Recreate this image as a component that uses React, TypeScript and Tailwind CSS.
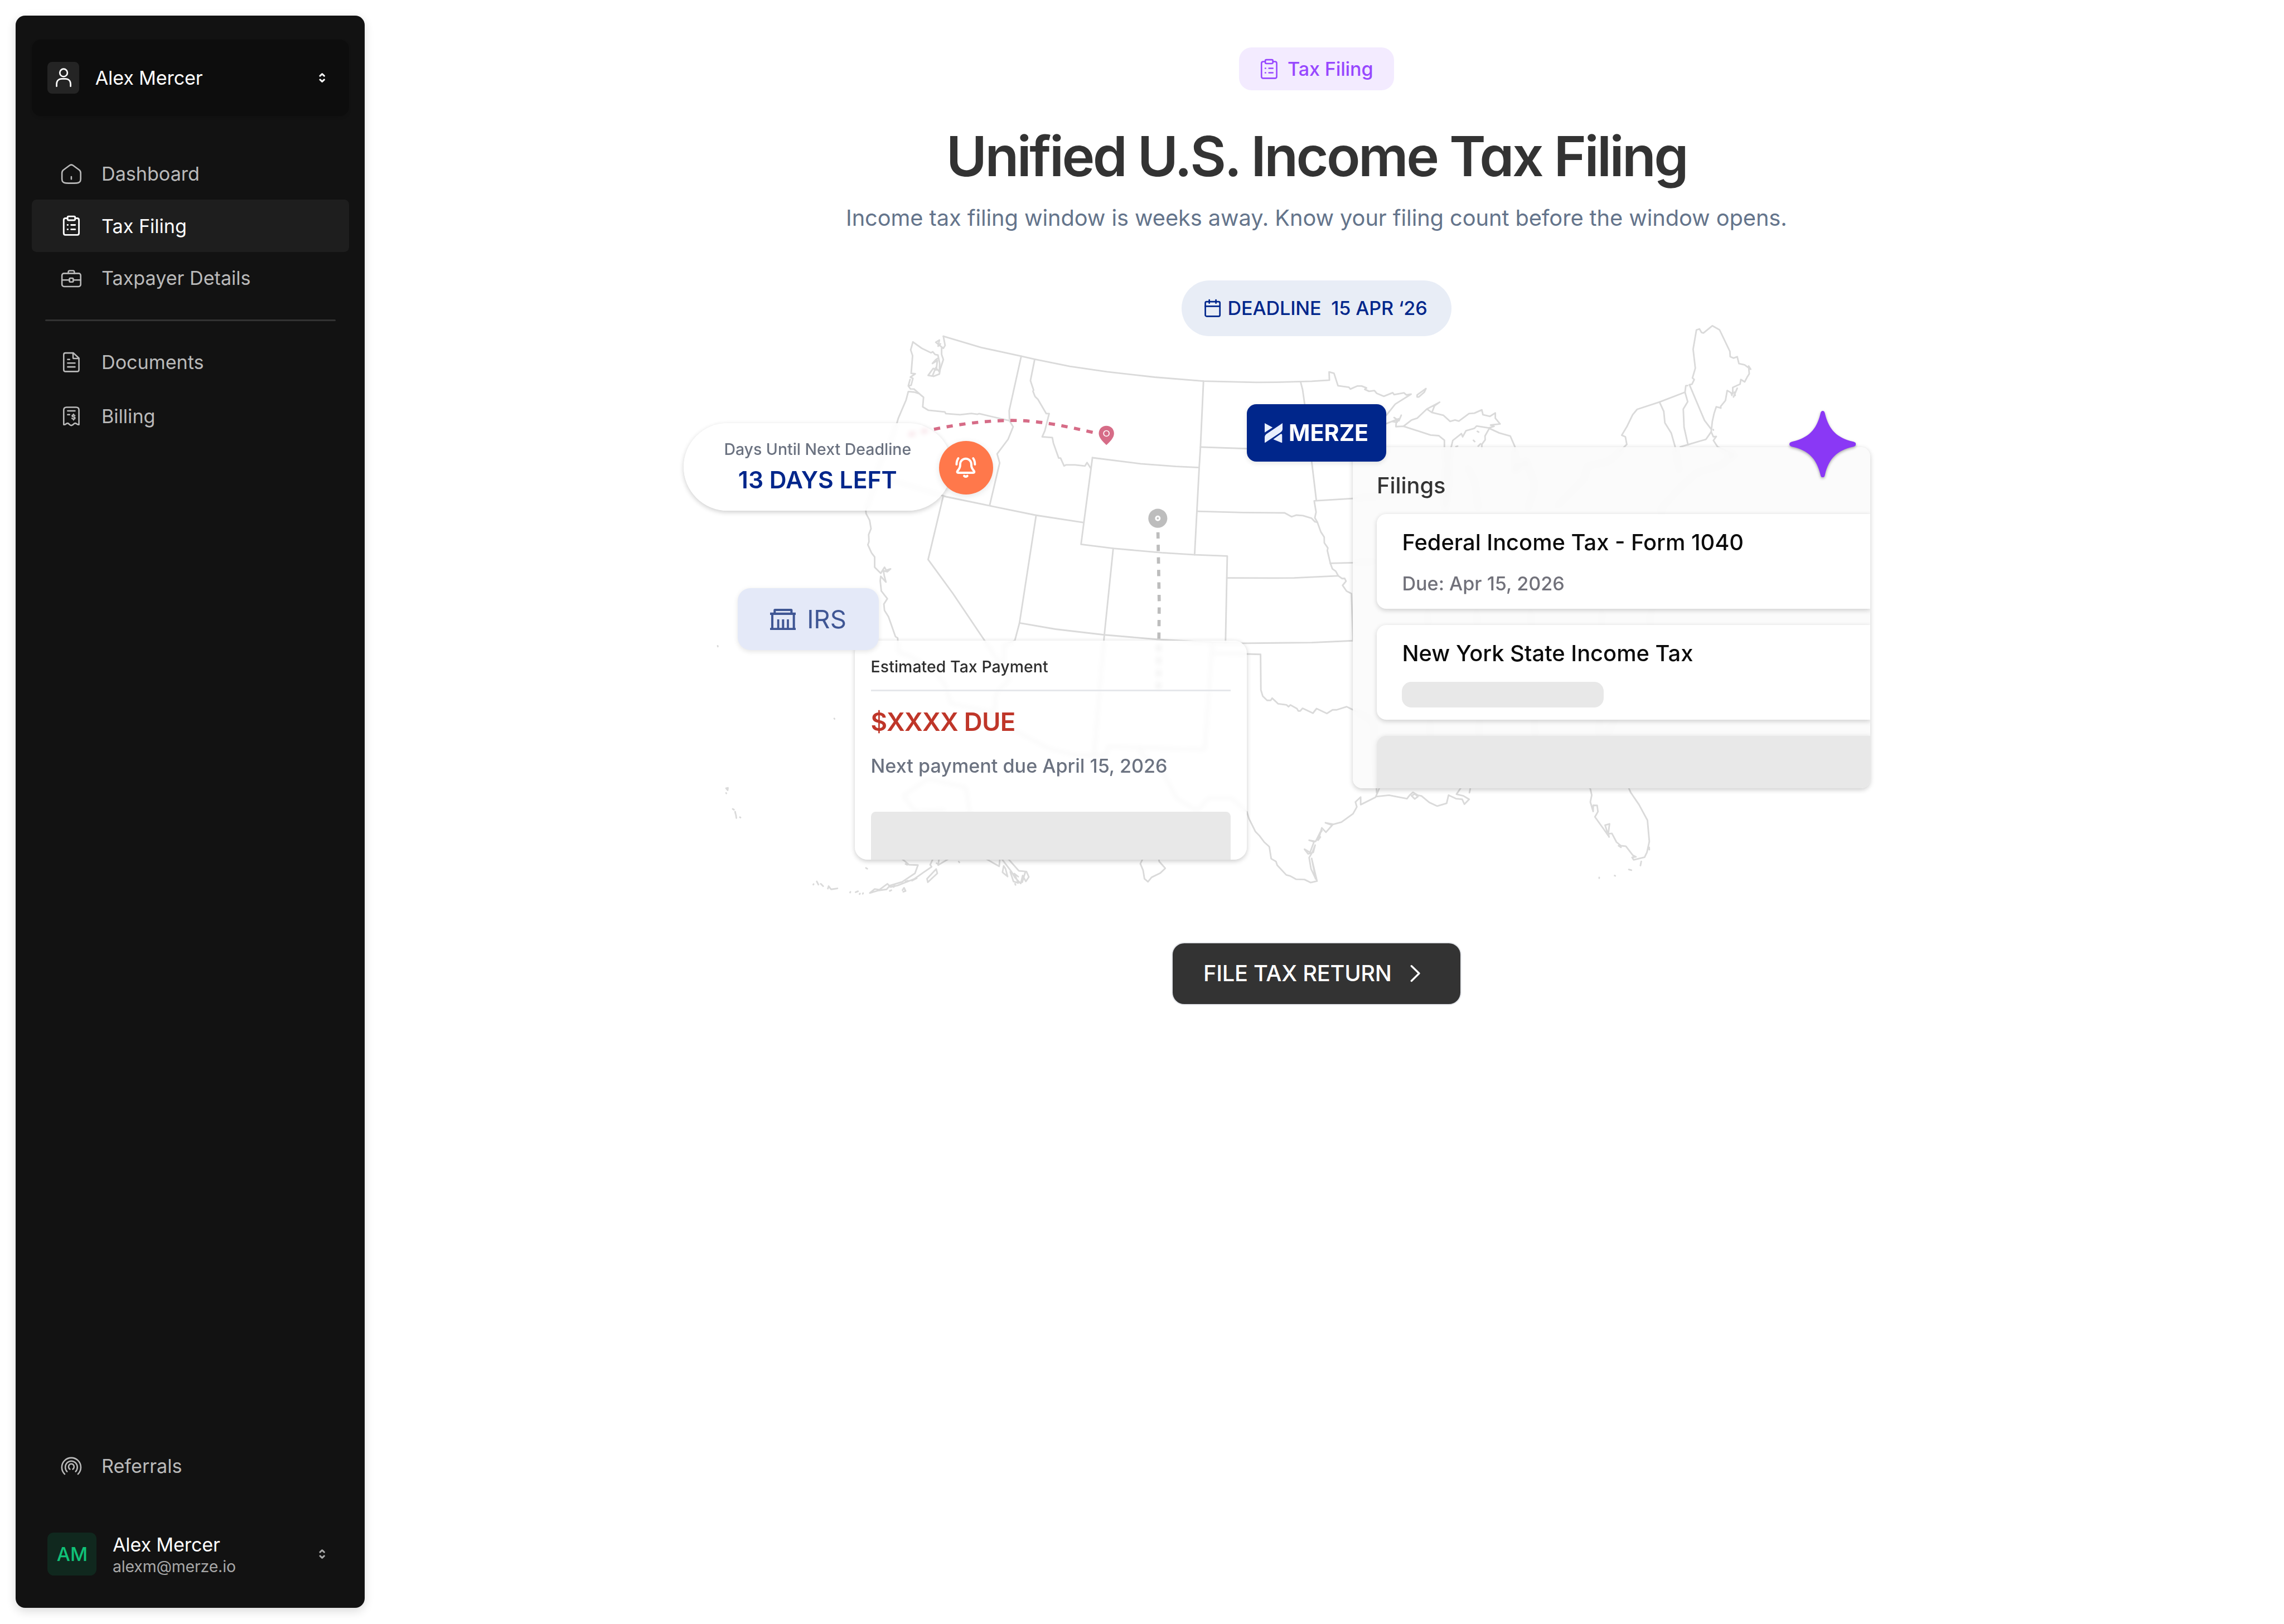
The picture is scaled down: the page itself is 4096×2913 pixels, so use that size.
import type { ReactNode } from 'react'
import { clsx } from 'clsx'

type IconProps = { className?: string }

/* ---------- icons ---------- */

function Glyph({ className, stroke = 0.9, children }: IconProps & { stroke?: number; children: ReactNode }) {
  return (
    <svg
      viewBox="0 0 14 14"
      className={clsx('shrink-0', className ?? 'size-3.5')}
      fill="none"
      stroke="currentColor"
      strokeWidth={stroke}
      strokeLinecap="round"
      strokeLinejoin="round"
    >
      {children}
    </svg>
  )
}

function HomeIcon() {
  return (
    <Glyph>
      <path d="M1.1 6.3c0-1 .4-1.5 1.2-2L6 1.6c.6-.4 1.4-.4 2 0l3.7 2.7c.8.5 1.2 1 1.2 2v3.9c0 1.7-.8 2.5-2.5 2.6-2.3.1-4.5.1-6.8 0-1.7-.1-2.5-.9-2.5-2.6z" />
      <path d="M7 8.8v1.5" />
    </Glyph>
  )
}

function ClipboardIcon({ className, stroke = 1 }: IconProps & { stroke?: number }) {
  return (
    <Glyph className={className} stroke={stroke}>
      <path d="M4.6 2.3H3.3c-.7 0-1.1.4-1.1 1.1v8.3c0 .7.4 1.1 1.1 1.1h7.4c.7 0 1.1-.4 1.1-1.1V3.4c0-.7-.4-1.1-1.1-1.1H9.4" />
      <rect x="4.6" y="1.1" width="4.8" height="2.4" rx=".7" />
      <path d="M4.6 6.5h.2M6.9 6.5h2.5M4.6 9.3h.2M6.9 9.3h2.5" />
    </Glyph>
  )
}

function BriefcaseIcon() {
  return (
    <Glyph>
      <rect x="1.1" y="4" width="11.8" height="8.3" rx="1.3" />
      <path d="M5.1 4V3.2c0-.6.3-.9.9-.9h2c.6 0 .9.3.9.9V4M1.1 8.2h4.7M8.2 8.2h4.7" />
      <rect x="5.8" y="7" width="2.4" height="2.4" rx=".5" />
    </Glyph>
  )
}

function DocumentIcon() {
  return (
    <Glyph>
      <path d="M8.3 1.1h-5c-.7 0-1.1.4-1.1 1.1v9.5c0 .7.4 1.1 1.1 1.1h7.4c.7 0 1.1-.4 1.1-1.1V4.4z" />
      <path d="M8.1 1.2v2.9c0 .3.2.5.5.5h3.1M4.7 5.2h1.2M4.7 7.5h4.6M4.7 9.9h4.6" />
    </Glyph>
  )
}

function ReceiptIcon() {
  return (
    <Glyph>
      <path d="M2.2 12.2V3c0-1.2.6-1.8 1.8-1.8h6c1.2 0 1.8.6 1.8 1.8v9.2c-1.3.2-1.5-.9-2.4-.9s-1.3 1.4-2.4 1.4-1.4-1.4-2.4-1.4-1.1 1.1-2.4.9z" />
      <path d="M4.7 3.5h4.6M4.7 5.9h1.2" />
      <path d="M9.2 6.5c-.3-.5-1.7-.5-1.7.2s1.8.5 1.8 1.3-1.5.8-1.9.2M8.4 5.6v.5M8.4 8.6v.6" strokeWidth={0.85} />
    </Glyph>
  )
}

function ReferralIcon() {
  return (
    <Glyph>
      <path d="M2.8 12A6 6 0 1 1 11.2 12" />
      <path d="M4.3 10.4a3.8 3.9 0 1 1 5.4 0" />
      <path d="M6.1 8.9a1.75 1.8 0 1 1 1.8 0" />
    </Glyph>
  )
}

function UserIcon() {
  return (
    <svg viewBox="0 0 12 12" className="size-3" fill="none" stroke="currentColor" strokeWidth=".95" strokeLinecap="round">
      <circle cx="6" cy="3" r="2.4" />
      <path d="M1.6 11.5v-1.4c0-2 1.3-3.3 3.3-3.3h2.2c2 0 3.3 1.3 3.3 3.3v1.4" />
    </svg>
  )
}

function UpDownIcon({ className }: IconProps) {
  return (
    <svg
      viewBox="0 0 4 6"
      className={clsx('h-1.5 w-1', className)}
      fill="none"
      stroke="currentColor"
      strokeWidth="1.05"
      strokeLinecap="round"
      strokeLinejoin="round"
    >
      <path d="M.7 1.8 2 .6l1.3 1.2M.7 4.2 2 5.4l1.3-1.2" />
    </svg>
  )
}

function CalendarIcon() {
  return (
    <svg
      viewBox="0 0 11 12"
      className="h-3 w-[11px]"
      fill="none"
      stroke="currentColor"
      strokeWidth=".95"
      strokeLinecap="round"
      strokeLinejoin="round"
    >
      <rect x=".9" y="1.8" width="9.2" height="9.2" rx=".8" />
      <path d="M.9 4.7h9.2M3.4.7v2M7.6.7v2" />
    </svg>
  )
}

function BellIcon() {
  return (
    <Glyph stroke={1.4}>
      <path d="M7 1.3a3.5 3.5 0 0 1 3.5 3.5c0 1.9.4 2.7 1.7 4.3.5.7.1 1.1-.5 1.1H2.3c-.6 0-1-.4-.5-1.1 1.3-1.6 1.7-2.4 1.7-4.3A3.5 3.5 0 0 1 7 1.3z" />
      <path d="M1.2 4.9C1.2 3.3 1.6 2 2.3 1.1M12.8 4.9c0-1.6-.4-2.9-1.1-3.8M6 12.2c.5.4 1.5.4 2 0" />
      <path d="M6.3 12.4c.4.4 1 .4 1.4 0" />
    </Glyph>
  )
}

function BankIcon() {
  return (
    <svg viewBox="0 0 16.4 13.4" className="h-[13.4px] w-[16.4px]" fill="currentColor">
      <path d="M2.2 2.4V.9c0-.6.3-.9.9-.9h10.2c.6 0 .9.3.9.9v1.5h2.2v1.5h-.7V12h.7v1.4H0V12h.7V3.9H0V2.4zm1.4 0h9.2v-1H3.6zM2.1 3.9V12h2.4V6.7h1.3V12h1.7V6.7h1.4V12h1.7V6.7h1.3V12h2.4V3.9z" />
    </svg>
  )
}

function MerzeMark() {
  return (
    <svg viewBox="0 0 11.3 12.5" className="h-[12.5px] w-[11.3px]" fill="#e8effd">
      <path d="M0 0v5.9l5-3.2zM0 12.5v-3C0 8 .3 7.4 1.5 6.6L11.3 0v3c0 1.6-.3 2.1-1.5 3zM5.4 10.2 9.7 7.1c.8-.5 1.3-.4 1.3.6v4.8z" />
    </svg>
  )
}

function Sparkle({ className }: IconProps) {
  return (
    <svg viewBox="0 0 42 42" className={className} fill="#8a38f5">
      <path d="M21 0c.8 0 1.3.7 1.5 2C25 12 30 17 40 19.3c1.3.3 2 .8 2 1.7s-.7 1.4-2 1.7C30 25 25 30 22.5 40c-.2 1.3-.7 2-1.5 2s-1.3-.7-1.5-2C17 30 12 25 2 22.7.7 22.4 0 21.9 0 21s.7-1.4 2-1.7C12 17 17 12 19.5 2c.2-1.3.7-2 1.5-2z" />
    </svg>
  )
}

/* ---------- map ---------- */

const COAST = [
  // washington + puget sound
  'M575.6 215.8 574.2 220.8 575.4 224.4 574.5 235.6 577.1 235.9 574 238 575.6 238.8 574.5 243.1 572.7 243.5 573.8 239.5M572.7 243.5 574 245.4 576.3 245.5 579.6 248.4 582.3 250.7 581.8 256.7 585.4 258.9 595.7 259.9 596.3 261 605.3 261.7 612.4 260.9 616.4 261.4 617.3 261 636.5 265.5',
  'M575.6 215.8 581.2 219.8 587 222.6 588.1 222 589.6 223.7 591.4 224.1 592.5 229.4 592.3 234.6 590 232 587.9 237.3 585.2 236.9 588.4 232.5 590.3 233.5 591 227.5 587.9 229.4 590.1 226.9 591.5 226',
  'M594.8 212.2 595.9 218 594.8 219.8 593.7 219 593.7 223.7 594.8 226.9 592.8 233 592.3 236 588.5 237.5M593.7 219 590 216 592.3 214.6 591.5 218.5 593 217',
  // northern border through lake superior
  'M594.8 212.2 618.7 219.3 643.9 224.8 652.4 226.7 674.5 231.2 698.1 234.6 728 238 758.8 240.5 792 241.3 804.7 241.2 827 240.6 838.2 239.9 838 234.7 841.1 235.6 843.6 243.4 850.5 244.4 851.4 245.5 855.7 243.6 858.5 243.6 861.6 244.8 860.5 245.7 863.2 246.9 866.6 246.5 868 248.2 872.5 250.1 878.1 247.8 879 249 885.2 247.9 886.7 249.2 889.7 248.7 879.7 255 874.1 262 867 269 874.1 267.3 882 264.2 880.8 266.5 878 266M883.5 262 882 265.5 879 263.5M880.5 264.5 880.1 269.2 884.9 269 902 274.5 907.1 274.9 910.7 277.8 910.7 284 914 300 911 322',
  'M884.9 269 890 265 893.5 263.9 899.6 258.1 907.7 253.8 904.5 256 902.8 260.3 899.6 258.1M902.8 260.3 910 262 914.3 265.9 917.4 265 919.8 265.7 926.2 261 929.6 260.7 934.3 258.6 935 261.7 939.4 262.7 942.8 260.6 942.8 263.9 945.8 267.5 939.8 268.2 942 269 938.7 270 931 268.8 929.6 270.3 924.3 271.8 922.2 275.6 921.4 273.6 916 277.9 915 282 911 300 911 320',
  'M893.5 249.2 899.1 245.2 898 247.5 894.5 250.5 893.5 250.5zM931.5 272.2 932.3 272.6M929 277.8 929.8 278.6M918 281.8 919 281.5M932 281.5 933.5 280',
  'M934.3 284 934.3 280.4 936.4 277.5 936.3 275.1 939 270.3 945.3 273.2 952.2 275.1 955.2 282 955 298 962 290 968 306 963 322M925 294 930 304 932 322',
  // pacific coast, then the mexican border
  'M579.6 248.4 576.3 247.4 572.7 247.1 571.3 252.4 566.4 263.9 565.5 267 561 280 554 294 552 306 545.9 322 546.1 324.1 548.3 328.2 549.2 333.5 547.7 337.3 547.9 341.7 547.2 343.7 549.5 348.8 551.5 351.4 551.5 357.9 555.3 361.7 557.7 357.9 558.8 359.8 561.5 358.9 559.5 360.7 557 360 557.5 363 558.6 367.2 555.3 363.6 555 366.5 555.7 372.9 559.5 377.7 557.3 381.1 557.7 385.1 560.2 389.1 564.6 401.6 566 402.5 566.4 411.3 575.5 414.7 587.4 422.1 595.8 431.6 599.4 443.8 625.7 449.2 625.7 453.3 661.6 472.3 678.3 476.3 697.4 476.3 698.6 470.9 719 471.6 719 475 733.3 487.2 741.7 503.4 754.8 511.6 762 503.4 776.4 503.4 786.2 512.2',
  // gulf coast
  'M786.2 512.2 787.4 516.2 791.5 524.5 794.1 527.2 797.1 531.2 800.3 534.1 801.5 541.7 804.5 543.4 805.3 545.8 811 551.9 813.3 552.5 817.1 554.6 822.5 554.8 826.3 556.7 830.4 555.8 827 541.5 829.6 554.5 826.6 548 825.4 541 827.5 537.5 829.2 533.1 828 537.7 824.8 538.6 822.5 535.7 826 537.7 828.5 531 825.4 530 829.5 530.8 832.5 524.8 831.5 529 833.4 522.2 836 525 840 520.5 835.7 519 840.7 520 845.8 518.6 853.1 513.3 855.5 509 854.6 505.9 857.9 502.8 857.9 507.6 867.3 502.9 869.7 497.1M867.5 502.5 875.8 501.6 887.1 503.8 888.8 501.6 890.9 499.8 893.8 501.6 896.2 502.1 901.2 506.2 906.2 508.5 912.1 506.7 913.3 501.6 918 503.8 921.9 504.2 923.3 507.3 926.3 504.2 922.8 502.1 918.3 501 921 497.1M926.5 500 927 497.5M890 502 892 500.8 894 502.5 892 504zM832 526 833.5 524M831 530 832.5 528',
  // florida
  'M1002.1 495 1003.6 501.6 1002.7 505.9 1004.5 511.9 1004.5 508 1007 508.1 1007.5 512 1005.6 515.3 1011.2 523.1 1014.2 527.4 1012 520.5 1014.8 519.7 1014 526 1016.3 525.7 1019.2 531.2 1022 533.5 1025.1 533.8 1029.5 539.5 1031.5 540.5 1029 540.8 1030 542.4 1036.9 540.7 1038.4 537.7 1039.9 530.8 1038.7 517.4 1033.4 507.6 1028.1 499.8 1026 495M1039.8 534.5 1039.9 536M1034.8 543.4 1034.3 546M1027 548.5 1028.6 548.9M1018 552.3 1018.4 552.5M1008.3 553.5 1008.3 554M1020.5 533.5 1022 534.5M1014.2 526.5 1014.5 528',
  // new england
  'M1065.2 242.8 1066.8 242.4 1068.2 239.5 1067.1 238.5 1068.9 232.3 1067.5 220.4 1069.6 208.2 1071.5 207.6 1072.8 209.8 1074 210.2 1079.6 205.6 1084.2 208.2 1090.7 221.8 1090.9 225.1 1093 226 1095.3 225.1 1096.4 229.4 1099.9 230.2 1103.8 233 1102.5 231 1102.9 235.9 1101.5 238.1 1100 241 1097.6 239.5 1097.1 242.4 1092.5 244.5 1092.5 248.5 1089 246.4 1087.9 252.7 1084.9 256.4 1085 257.5 1082.1 256.7 1080.7 261 1079.6 266 1078.9 272.5 1080.3 275.6 1082.1 275.4 1080.3 277.9 1083 282 1094 287 1084 294 1070 298 1059 308 1047 321',
  'M1092 249.5 1091.5 248M1093 250.5 1095.3 245M1094 249.5 1093.5 247.5M1080.2 271 1080.3 271.4',
  'M1064 243.3 1062.9 243.4 1062.4 247.5 1046.3 253.7 1032.2 258.3 1029.4 261.7 1025.9 268.9 1022.5 274.6 1024.8 275.6 1025.7 280.4 1015 291 1000.5 294 999 302 981 320',
  // south east shore
  'M1047 321 1052 350 1040 390 1046 420 1020 450 1005 480 1002 497',
]

const STATES = [
  'M643.9 224.8 636.3 259.1 636.5 265.5 638.8 269.3 635.6 277.2 628.7 286.4 630.3 292.1 624 318.8',
  'M652.4 226.7 649.7 240.2 651.7 246.2 651.3 246.9 652.6 250.2 654.4 252 659.7 261 661.5 261 658.8 271.8 657.1 275.6 663.5 276.1 664.2 279.7 667.5 289 668.7 289 670.9 294 672.2 293.3 677.8 293.3 684.1 294 685.4 291.9 687.9 295.7',
  'M758.8 240.5 756.9 282.1 756.1 295 753.2 350',
  'M820 240.9 821.3 245.9 822.6 255 827 291 829.9 315.2',
  'M756.9 282.1 786.1 283.1 826 283.5',
  'M688.8 288.8 719.1 292.6 741.4 294.3 756.1 295',
  'M688.8 288.8 683.4 329.6 681.6 343.4 701.9 346 732.5 348.7 753.5 350 773.8 350.8 773.5 364.6 772.7 405',
  'M754.8 322.6 784 323.4 810 323.6 814.3 326 817.5 325 821.5 325.3 827 327 829.1 329.2 830.6 329.5',
  'M853 314.5 828.6 316 829.8 323.1 829 326.7 830.6 329.5 832.8 335.6 834.9 338.8 835 342.5 837.2 345.7 836.9 347.4 838.8 355.4 840.1 358.9 842.2 360.4 843.8 363.3 846.2 365 847.8 364.9 848.7 366.6 846.5 369.3 849 372.9 852.1 374.5 853 401.6 853 404.2',
  'M853 314.5 880 312M853 355 868 354',
  'M773.5 364.6 801.5 364.7 815.9 364.6 843.8 363.3M838.8 355.4 853 355',
  'M552 300 597 313.5 624 319.1 653.3 325.1 683.4 329.7',
  'M594.8 312.7 585.2 353 600.8 374.4 620.4 403.5 630 418 636.5 428.9 628.1 437 626.9 449.2',
  'M653.3 325.1 642.8 393 639.9 404 632.9 407 632.9 420.8',
  'M642.8 393 665.5 396.9 696.3 400.5 730.3 403.4 764 405.2 783.2 405.8 827 405.4 853 404.2',
  'M701.9 346 696.3 400.5 689.8 477',
  'M764.4 405.5 759.6 472.9 719 471.6M764.4 412 794.8 412.8 795 435.3 796.2 439.2 798.9 441.8 801.2 441.8 802.1 440.4 805.9 444 811.2 444.7 812.4 445.8 813.6 444.7 817.7 447 818.6 448.5 819.8 448.5 821.3 446.8 827.8 449.9 830.1 447 836.6 450.1 840.2 447.8 842.8 447.8 849 445.8 853.1 447.8 866 455 868 500',
  'M1065.2 242.8 1074.7 265.3 1078.9 270.8',
  'M1062.4 247.5 1064.1 253.5 1061.3 258.1 1061.8 269.6 1064.3 280.7',
  'M1046.3 253.7 1049 259.6 1049.7 266.8 1053.7 273.2 1056.2 282 1059 298',
  'M1059.4 282 1075.6 277.2 1078.9 272.5',
  'M900 384 902 470M931 384 933 470M965 384 968 470M1010 384 1008 470',
]

const ISLANDS = [
  // alaska
  'M596 511 577 512 569.5 502 585 491.2 609 496.7 612.6 520',
  'M567.6 541 570.7 543.4 573.1 545.5 578.8 545.7 576.9 550.9 568.8 556.3 561.1 558.6 559 561 553.9 561.7 548.4 563.3 551.5 560.8 554.5 561.2 559.5 557.5 561.5 559.5 565.9 558.6 576.7 554.3 582 550.5 587.4 546.8 586.5 545.5 588.6 541M592.2 541 591.5 545.7 599.4 541M590.3 548.2 591 550.9 585 556.5 584.5 554.3z',
  'M620.4 541 630 546.5 630.5 541M635 541 642.4 549.3 647.2 549.8 648.7 553.2 646.8 556 644.8 552.3 643.6 557.3 640 553.6 637.5 549.5 631 541M632.8 546.2 632.1 550.2 635.3 552.9 634 548zM637 550 639 556 642 557 639.5 551 642 553M644.5 556.5 646.5 550',
  'M512.8 558 513 557.7M515 556 516 558M517.5 557.5 519 559M522 560.5 522.5 559 524 561 528 560.4M536 563 536.2 562.6M539.5 562.8 541 562.2M542 564 542.2 563.6M544 563.8 544.2 563.4M546 547.5 546.8 548M561 562 562 561.5M563.5 559.5 564 558.5M569 561.5 570 560 571 562 569.5 562.5M571 556 572.5 555.5M575 555.5 578 554M571 545 572 545.5M590.5 544.5 590.9 544.8M604.5 543.5 604.9 544M640 557.5 640.3 558.2',
  // hawaii
  'M720.9 541 719 544.8 720.7 548.9 721.6 554.3 723.8 556.2 726.1 553.4 731.6 550.7 734.7 547.7 730.9 543.4 730.5 541',
  'M452.5 407.4 452.6 407.9M526 453.2 526.2 453.5M457.8 497.2 459 497 458.8 498.5zM457.8 500.2 458 500.5M462 510.3 462.8 510.8M463.5 512 463.8 513.5M464 514 464.3 516M466.5 515.5 466.9 515.7',
]

function HeroMap() {
  return (
    <svg viewBox="430 177 800 393" className="absolute inset-0 size-full" fill="none">
      <g stroke="#dadada" strokeLinejoin="round" strokeLinecap="round">
        {[...COAST, ...STATES, ...ISLANDS].map((d, i) => (
          <path key={i} d={d} />
        ))}
      </g>

      {/* pink route */}
      <path
        d="M573 274.3C600 268 620 265.3 638 265.3c18 0 34 3.7 52 7.7"
        stroke="#d66c87"
        strokeWidth="2"
        strokeDasharray="4 4.1"
      />
      <path
        d="M697.6 268.7c2.7 0 4.8 2 4.8 4.8 0 2.6-2.3 5-4.8 7.3-2.5-2.3-4.8-4.7-4.8-7.3 0-2.8 2.1-4.8 4.8-4.8z"
        fill="#d66c87"
      />
      <circle cx="697.6" cy="273.5" r="1.75" stroke="#fff" strokeWidth=".6" />

      {/* grey route */}
      <path d="M730.1 335.8 730.9 380 730.4 437" stroke="#bdbdbd" strokeWidth="2" strokeDasharray="4 3.9" />
      <circle cx="730" cy="327" r="6" fill="#bdbdbd" />
      <circle cx="730" cy="327" r="1.2" stroke="#fff" strokeWidth="1.1" />
    </svg>
  )
}

/* ---------- sidebar ---------- */

function NavItem({ icon, label, active, tall }: { icon: ReactNode; label: string; active?: boolean; tall?: boolean }) {
  return (
    <a
      className={clsx(
        'flex items-center gap-3 rounded-[3px] pl-[18px] text-xs',
        tall ? 'h-[34px]' : 'h-[33px]',
        active ? 'bg-[#1e1e1e] text-white' : 'text-[#bababa]'
      )}
    >
      {icon}
      <span>{label}</span>
    </a>
  )
}

function Sidebar() {
  return (
    <aside className="my-2.5 ml-2.5 flex h-[1004px] w-[220px] shrink-0 flex-col rounded-md bg-[#121212] px-2.5 pt-[15px] pb-[19px] shadow-[0_2px_6px_rgba(0,0,0,0.14)]">
      <button className="flex h-12 items-center rounded-md bg-[#0d0d0d] pr-[15px] pl-2.5 text-white shadow-[0_1px_2px_rgba(0,0,0,0.1)]">
        <span className="flex size-5 items-center justify-center rounded-[3px] bg-[#242424]">
          <UserIcon />
        </span>
        <span className="ml-2.5 text-xs tracking-[-0.05px]">Alex Mercer</span>
        <UpDownIcon className="ml-auto" />
      </button>

      <nav className="mt-5 flex flex-col">
        <NavItem icon={<HomeIcon />} label="Dashboard" />
        <NavItem icon={<ClipboardIcon />} label="Tax Filing" active />
        <NavItem icon={<BriefcaseIcon />} label="Taxpayer Details" />
      </nav>

      <div className="mx-[8.5px] mt-[9.5px] h-px rounded-full bg-[#333]" />

      <nav className="mt-[9px] flex flex-col">
        <NavItem icon={<DocumentIcon />} label="Documents" tall />
        <NavItem icon={<ReceiptIcon />} label="Billing" tall />
      </nav>

      <div className="mt-auto">
        <NavItem icon={<ReferralIcon />} label="Referrals" />
      </div>

      <div className="mt-[25.5px] flex h-[28.5px] items-start pr-[15px] pl-2.5">
        <span className="flex h-[27px] w-[31px] items-center justify-center rounded bg-[#10281e] text-xs font-medium text-[#10c278]">
          AM
        </span>
        <div className="ml-2.5 flex flex-col">
          <span className="mt-[0.5px] text-xs leading-[14px] tracking-[-0.05px] text-white">Alex Mercer</span>
          <span className="text-[10px] leading-[14px] tracking-[-0.05px] text-[#a8a8a8]">alexm@merze.io</span>
        </div>
        <UpDownIcon className="mt-[10.5px] ml-auto text-[#a8a8a8]" />
      </div>
    </aside>
  )
}

/* ---------- hero ---------- */

function CountdownPill() {
  return (
    <>
      <div className="absolute top-[90px] left-[1px] flex h-[55px] w-[169px] flex-col items-center rounded-full bg-white/75 shadow-[0_1px_3px_rgba(0,0,0,0.2)] backdrop-blur-[1.5px]">
        <span className="mt-[9px] text-[10px] leading-[15px] font-medium text-[#6b7280]">Days Until Next Deadline</span>
        <span className="mt-[2.5px] text-[15px] leading-[18px] font-semibold text-[#00268b]">13 DAYS LEFT</span>
      </div>
      <div className="absolute top-[101px] left-[162px] flex size-[34px] items-center justify-center rounded-full bg-[#ff784b] text-white shadow-[0_1px_4px_rgba(0,0,0,0.1)]">
        <BellIcon />
      </div>
    </>
  )
}

function PaymentCard() {
  return (
    <div className="absolute top-[227px] left-[109px] flex h-[138px] w-[247px] flex-col overflow-hidden rounded-lg bg-white/70 px-2.5 pt-[9px] shadow-[0_1px_3px_rgba(0,0,0,0.2)] backdrop-blur-[1.5px]">
      <h3 className="text-[10px] leading-[15px] font-medium tracking-[0.02px] text-[#2e2e2e]">Estimated Tax Payment</h3>
      <div className="mt-[7px] h-px bg-[#e5e7eb]" />
      <p className="mt-[9.5px] text-base leading-5 font-semibold tracking-[-0.25px] text-[#bf3629]">$XXXX DUE</p>
      <p className="mt-[9px] text-xs leading-[17px] font-medium text-[#6b7280]">Next payment due April 15, 2026</p>
      <div className="mt-auto h-[30px] rounded-t-[3px] bg-[#e8e8e8]" />
    </div>
  )
}

function FilingsPanel() {
  return (
    <div className="absolute top-[105px] left-[423px] h-[215px] w-[326px] overflow-hidden rounded-md bg-[#fafafa]/80 pt-[15px] pl-[15px] shadow-[0_1px_3px_rgba(0,0,0,0.2)] backdrop-blur-[2px]">
      <h3 className="text-sm leading-[18px] font-medium text-[#333]">Filings</h3>
      <div className="mt-[9px] flex flex-col gap-2.5">
        <div className="h-[60px] rounded-l-md bg-white pl-4 shadow-[0_1px_3px_rgba(0,0,0,0.18)]">
          <p className="pt-[9px] text-sm leading-[18px] font-medium text-[#0a0a0a]">Federal Income Tax - Form 1040</p>
          <p className="mt-[8.5px] text-xs leading-[17px] font-medium text-[#71717a]">Due: Apr 15, 2026</p>
        </div>
        <div className="h-[60px] rounded-l-md bg-white pl-4 shadow-[0_1px_3px_rgba(0,0,0,0.18)]">
          <p className="pt-[9px] text-sm leading-[18px] font-medium text-[#0a0a0a]">New York State Income Tax</p>
          <div className="mt-[9px] h-4 w-[127px] rounded-md bg-[#e8e8e8]" />
        </div>
        <div className="h-[60px] rounded-l-md bg-[#e8e8e8] shadow-[0_0_3px_rgba(0,0,0,0.1)]" />
      </div>
    </div>
  )
}

function Hero() {
  return (
    <section className="relative mt-[29.5px] h-[393px] w-[800px]">
      <HeroMap />

      <div className="absolute top-0 left-[315px] flex h-[35px] w-[170px] items-center rounded-full bg-[#e8edf6] pl-[14px] text-[#00268b]">
        <CalendarIcon />
        <span className="ml-1 text-xs font-medium tracking-[-0.05px] whitespace-pre">DEADLINE  15 APR ‘26</span>
      </div>

      <CountdownPill />
      <PaymentCard />

      <div className="absolute top-[194px] left-[35px] flex h-[39px] w-[89px] items-center justify-center gap-[7px] rounded-lg bg-[#e4e9f8] text-[#3f5694] shadow-[0_1px_3px_rgba(0,0,0,0.1)]">
        <BankIcon />
        <span className="text-base">IRS</span>
      </div>

      <FilingsPanel />

      <div className="absolute top-[78px] left-[356px] flex h-9 w-[88px] items-center justify-center gap-1 rounded-md bg-[#00268b] shadow-[0_1px_3px_rgba(0,0,0,0.1)]">
        <MerzeMark />
        <span className="text-[14.5px] font-bold text-white">MERZE</span>
      </div>

      <Sparkle className="absolute top-[82px] left-[698px] size-[42px] drop-shadow-[0_1px_1px_rgba(0,0,0,0.35)]" />
    </section>
  )
}

export default function App() {
  return (
    <div className="flex h-[1024px] w-[1440px] overflow-hidden bg-white font-['Inter',sans-serif] [zoom:2.844444]">
      <Sidebar />

      <main className="flex flex-1 flex-col items-center pr-2.5">
        <div className="mt-[30px] flex h-[27px] w-[98px] items-center justify-center gap-[4.5px] rounded-lg bg-[#f3ebff] pr-px text-[#9747ff]">
          <ClipboardIcon stroke={0.9} />
          <span className="text-xs font-medium tracking-[-0.05px]">Tax Filing</span>
        </div>

        {/* cv11 gives the single-storey a */}
        <h1 className="mt-5 text-[35px] leading-[43px] font-semibold tracking-[-1.25px] whitespace-nowrap text-[#333] [font-feature-settings:'cv11']">
          Unified U.S. Income Tax Filing
        </h1>
        <p className="mt-[7.5px] text-sm leading-5 tracking-[-0.03px] whitespace-nowrap text-[#64748b]">
          Income tax filing window is weeks away. Know your filing count before the window opens.
        </p>

        <Hero />

        <button className="mt-6 flex h-10 w-[183px] items-center rounded-lg border border-[#e5e7eb] bg-[#333] pl-[19.5px] text-sm font-medium tracking-[-0.1px] text-white">
          FILE TAX RETURN
          <svg
            viewBox="0 0 8 12"
            className="ml-[11px] h-3 w-2"
            fill="none"
            stroke="currentColor"
            strokeWidth="1.2"
            strokeLinecap="round"
            strokeLinejoin="round"
          >
            <path d="M1.5 1.3 6.3 6 1.5 10.7" />
          </svg>
        </button>
      </main>
    </div>
  )
}
